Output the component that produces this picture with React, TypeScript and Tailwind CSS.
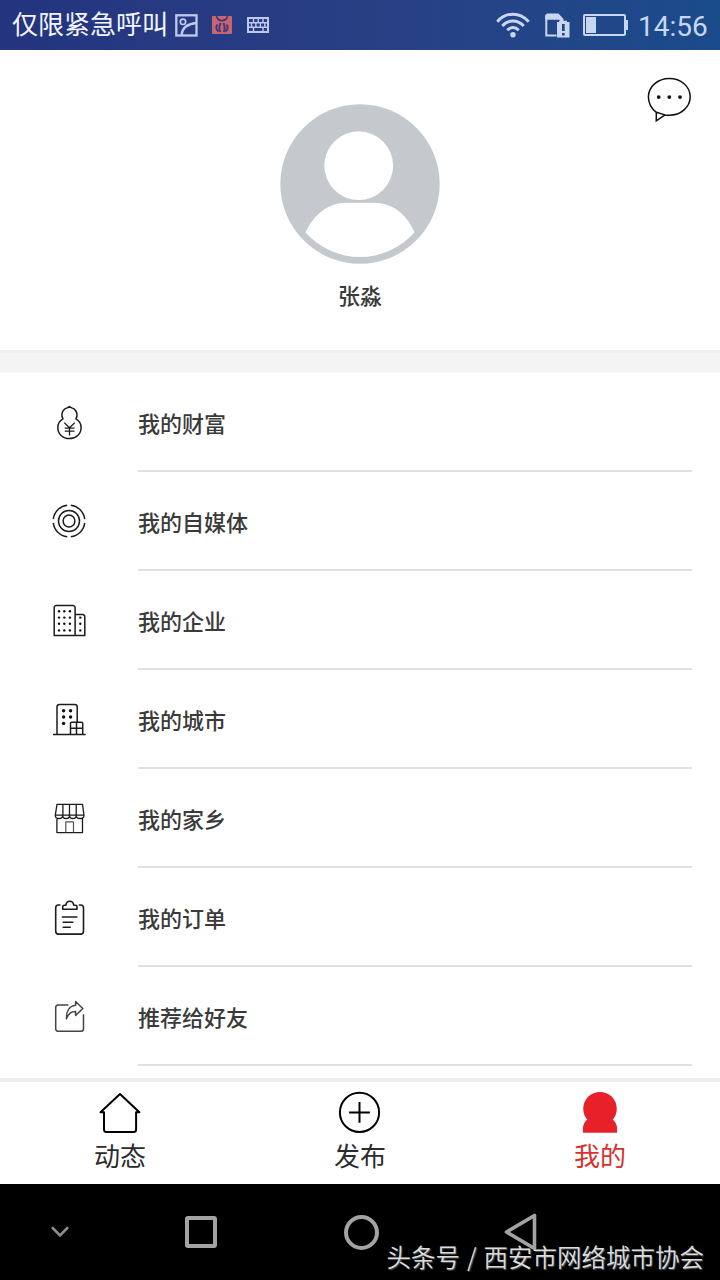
import type { ReactNode } from 'react';

const font = "font-['Roboto','Noto_Sans_CJK_SC',sans-serif]";

const Line = ({ children }: { children: ReactNode }) => (
  <svg
    width="40"
    height="40"
    viewBox="0 0 40 40"
    fill="none"
    stroke="#1c1c1c"
    strokeWidth="1.5"
    strokeLinejoin="round"
  >
    {children}
  </svg>
);

const Dots = ({ points, r }: { points: number[][]; r: number }) => (
  <g fill="#111" stroke="none">
    {points.map(([x, y]) => (
      <circle key={`${x}-${y}`} cx={x} cy={y} r={r} />
    ))}
  </g>
);

const Wealth = () => (
  <Line>
    <path d="M20.4 4.6c-1.2 1.2-3.2 1.3-4.8 2.6-3 2.5-3.5 6.7-1.6 9.6-3 1.7-5.2 4.8-5.2 8.6 0 6.5 5 11.2 11.6 11.2s11.7-4.7 11.7-11.2c0-3.8-2.2-6.9-5.2-8.6 1.9-2.9 1.4-7.1-1.6-9.6-1.6-1.3-3.7-1.4-4.9-2.6z" />
    <path d="M15.2 20.6l5.3 5.2 5.3-5.2M20.5 25.8v7.6M15.7 26.2h9.8M15.7 29.2h9.8" strokeWidth="1.3" />
  </Line>
);

const Media = () => (
  <Line>
    <circle cx="20" cy="20" r="5.9" />
    <circle cx="20" cy="20" r="10.5" />
    <path d="M21.8 4.3A15.8 15.8 0 0 1 35.7 18.2M35.7 21.8A15.8 15.8 0 0 1 21.8 35.7M18.2 35.7A15.8 15.8 0 0 1 4.3 21.8M4.3 18.2A15.8 15.8 0 0 1 18.2 4.3" />
  </Line>
);

const companyDots = [
  ...[11.3, 17.6, 23.7, 30.4].flatMap((y) => [10, 15.3, 20.9].map((x) => [x, y])),
  ...[17.6, 23.7, 30.4].map((y) => [31.3, y]),
];

const Company = () => (
  <Line>
    <path d="M5.2 35.4V7.7a2.3 2.3 0 0 1 2.3-2.3h16.3a2.3 2.3 0 0 1 2.3 2.3v27.7zM26.1 14.5h7.6a2.3 2.3 0 0 1 2.1 2.3v18.6h-9.7" />
    <Dots points={companyDots} r={1.2} />
  </Line>
);

const City = () => (
  <Line>
    <path d="M8 35V8a2.5 2.5 0 0 1 2.5-2.5H25.7a2.5 2.5 0 0 1 2.5 2.5v15" />
    <path d="M21.5 35V24.3a1 1 0 0 1 1-1h10.2a1 1 0 0 1 1 1V35M27.5 23.3V35M21.5 29.3h12.2M4 35.4h32.7" />
    <Dots points={[[14.6, 11.7], [21.6, 11.7], [14.6, 18], [21.6, 18], [14.6, 24.4]]} r={1.7} />
  </Line>
);

const Shop = () => (
  <Line>
    <path
      d="M8 6.4h25.5L35 17.2H6.3zM13.9 6.4v11M20.5 6.4v11M27.2 6.4v11M6.3 17.2c0 4.4 7.4 4.4 7.4 0c0 4.4 6.8 4.4 6.8 0c0 4.4 6.7 4.4 6.7 0c0 4.4 7.8 4.4 7.8 0M7.9 20v14.6h25.6V20"
      strokeWidth="1.3"
    />
    <path d="M16.8 34.5V23.8h7.7v10.7" stroke="#555" strokeWidth="1.2" />
  </Line>
);

const Order = () => (
  <Line>
    <g strokeWidth="1.6">
      <path d="M11.5 8H9.3a2.8 2.8 0 0 0-2.6 2.8v23.5a2.8 2.8 0 0 0 2.8 2.8h22.2a2.8 2.8 0 0 0 2.8-2.8V10.8A2.8 2.8 0 0 0 31.7 8h-1.9" />
      <path d="M13.7 12.2V9.8c0-1 .7-1.6 1.6-1.6h1.6c.3-2.5 1.8-3.9 3.9-3.9s3.6 1.4 3.9 3.9h1.7c.9 0 1.6.6 1.6 1.6v2.4zM12.8 20h15.6M13.6 25.3h10.8M13.6 30.3h8.2" />
    </g>
  </Line>
);

const Share = () => (
  <Line>
    <g stroke="#444">
      <path d="M19.3 9H9a2.5 2.5 0 0 0-2.3 2.5v21.3A2.5 2.5 0 0 0 9 35.3h23a2.5 2.5 0 0 0 2.5-2.5V18.3" />
      <path d="M26.6 5.5l7.2 7-7.2 7v-4c-4.5-.2-7.3 2.3-9.1 7.2-.4-7.3 2.7-12.6 9.1-13.4z" />
    </g>
  </Line>
);

const menus = [
  { title: '我的财富', icon: <Wealth /> },
  { title: '我的自媒体', icon: <Media /> },
  { title: '我的企业', icon: <Company /> },
  { title: '我的城市', icon: <City /> },
  { title: '我的家乡', icon: <Shop /> },
  { title: '我的订单', icon: <Order /> },
  { title: '推荐给好友', icon: <Share /> },
];

const tabs = [
  {
    title: '动态',
    active: false,
    icon: (
      <path
        d="M22 3L2.5 21.3H6v17.2a2.6 2.6 0 0 0 2.6 2.6h26.9a2.6 2.6 0 0 0 2.6-2.6V21.3h3.3z"
        fill="none"
        stroke="#000"
        strokeWidth="2"
        strokeLinejoin="round"
      />
    ),
  },
  {
    title: '发布',
    active: false,
    icon: (
      <g fill="none" stroke="#000" strokeWidth="2">
        <circle cx="21.5" cy="21.4" r="19.6" />
        <path d="M21.5 11v20.8M11.1 21.4h20.8" />
      </g>
    ),
  },
  {
    title: '我的',
    active: true,
    icon: (
      <g fill="#e8202a">
        <circle cx="22" cy="17.7" r="16.8" />
        <path d="M5 41.7V37c0-4 2.1-7 5.400-9.200h23.200C36.900 30 39 33 39 37v4.700z" />
      </g>
    ),
  },
];

const StatusBar = () => (
  <div className="h-[50px] shrink-0 flex items-center pl-3 pr-3 bg-linear-to-r from-[#24347f] via-[#293f84] to-[#194b8b] text-[#c9d6f2]">
    <div className="text-[26px] leading-[50px] text-[#f3f5ff] w-[163px] whitespace-nowrap">仅限紧急呼叫</div>
    <svg width="23" height="23" viewBox="0 0 23 23" fill="none" stroke="#bfcaf0" strokeWidth="2.3">
      <rect x="1.3" y="1.3" width="20.2" height="20.2" />
      <circle cx="8" cy="7.8" r="2.7" strokeWidth="1.7" />
      <path d="M6.5 21c.7-6.5 5.5-11 14.5-12" />
    </svg>
    <svg className="ml-[14px]" width="20" height="18" viewBox="0 0 20 18">
      <rect width="20" height="18" rx="1" fill="#c9656f" />
      <path d="M4.5 0c.8 3.2 3 4.6 5.5 4.6S14.700 3.200 15.500 0" fill="none" stroke="#363a7d" strokeWidth="1.6" />
      <path
        d="M6.5 15.5C4 13.5 3.8 11 5.3 8.5M8.3 16c-1.3-2.5-1.3-5.5.3-9M11.7 16c1.3-2.5 1.3-5.5-.3-9M13.5 15.5c2.5-2 2.7-4.5 1.2-7"
        fill="none"
        stroke="#45397b"
        strokeWidth="2"
      />
    </svg>
    <svg className="ml-[15px]" width="22" height="16" viewBox="0 0 22 16" fill="none" stroke="#bfcaf0" strokeWidth="1.4">
      <rect x="1" y="1" width="20" height="14" strokeWidth="2" />
      <path d="M1 5.7h20M1 10.2h20M6.5 1v4.7M11.2 1v4.7M16 1v4.7M4.5 5.7v4.5M8.9 5.7v4.5M13.4 5.7v4.5M17.8 5.7v4.5M6.5 10.2V15M16 10.2V15" />
    </svg>
    <div className="ml-auto flex items-center">
      <svg width="34" height="26" viewBox="0 0 34 26" fill="none" stroke="currentColor" strokeWidth="3">
        <path d="M1.3 9.7C10-.4 24-.4 32.7 9.7M6.3 14c6-6.7 15.4-6.7 21.4 0M11.3 18.3c3.3-3.6 8.1-3.6 11.4 0" />
        <circle cx="17" cy="22.8" r="2.7" fill="currentColor" stroke="none" />
      </svg>
      <svg className="ml-[15px]" width="25" height="25" viewBox="0 0 25 25">
        <path d="M11.5 22.5H1.3V5.5h12.5L17.5 8" fill="none" stroke="currentColor" strokeWidth="2" />
        <path d="M0 6.5V2.5L2 .5h11.5L18.5 6v3h-3V6.5z" fill="currentColor" />
        <path d="M12 9h2V7.8h8V9h2.5v15.5H12z" fill="currentColor" />
        <path d="M17 11h2.7v7H17zM17 20h2.7v2.5H17z" fill="#234583" />
      </svg>
      <svg className="ml-[13px]" width="45" height="22" viewBox="0 0 45 22">
        <rect x="1" y="1" width="41" height="20" rx="1" fill="none" stroke="currentColor" strokeWidth="2" />
        <path d="M3 3h10v16H3zM42 6h3v10h-3z" fill="currentColor" />
      </svg>
      <div className="ml-[10px] w-[70px] text-[28px] leading-[50px] whitespace-nowrap pt-[3px]">14:56</div>
    </div>
  </div>
);

const Profile = () => (
  <div className="relative h-[300px] shrink-0 pt-[54px] flex flex-col items-center">
    <svg width="160" height="160" viewBox="0 0 160 160">
      <circle cx="80" cy="80" r="79.7" fill="#c5c8cd" />
      <circle cx="78.7" cy="61.7" r="34.4" fill="#fff" />
      <path d="M25.6 128.5C34 110 49 98.8 66 98.8h28c18 0 33 11.2 40.4 29.7a72.6 72.6 0 0 1-108.8 0z" fill="#fff" />
    </svg>
    <div className="mt-[17px] text-[22px] leading-8 font-medium text-[#3a3a3a]">张淼</div>
    <button className="absolute right-[28px] top-[27px]">
      <svg width="45" height="46" viewBox="0 0 45 46" fill="none" stroke="#111" strokeWidth="1.5">
        <path d="M9.3 35.3v8.6l8.7-6c1.4.3 2.9.4 4.3.4 11.6 0 20.9-8.2 20.9-18.5S33.9 1.5 22.3 1.5 1.4 9.7 1.4 19.8c0 6.5 3.3 12 7.9 15.5zl8.7 2.6" />
        <Dots points={[[11.7, 20.1], [22.3, 20.1], [33, 20.1]]} r={1.9} />
      </svg>
    </button>
  </div>
);

export default function App() {
  return (
    <div className={`w-[720px] h-[1280px] overflow-hidden flex flex-col bg-white ${font}`} lang="zh-CN">
      <StatusBar />
      <Profile />
      <div className="h-[23px] shrink-0 bg-[#f4f4f4] border-t-3 border-[#efefef]" />

      <div className="h-[705px] shrink-0">
        {menus.map((item) => (
          <div key={item.title} className="h-[99px] flex pl-[49px] pr-7">
            <div className="w-[89px] pt-[29px]">{item.icon}</div>
            <div className="flex-1 border-b-2 border-[#e0e0e0] text-[22px] leading-[103px] font-medium text-[#3a3a3a]">
              {item.title}
            </div>
          </div>
        ))}
      </div>

      <div className="h-[106px] shrink-0 grid grid-cols-3 border-t-4 border-[#eeeeee]">
        {tabs.map((tab) => (
          <button key={tab.title} className="flex flex-col items-center pt-[9px]">
            <svg width="44" height="44" viewBox="0 0 44 44">
              {tab.icon}
            </svg>
            <span className={`text-[26px] leading-[44px] ${tab.active ? 'text-[#d9302f]' : 'text-[#2c2c2c]'}`}>
              {tab.title}
            </span>
          </button>
        ))}
      </div>

      <div className="relative h-24 shrink-0 bg-black">
        <div className="h-full grid grid-cols-[121px_160px_160px_160px] items-center justify-items-center text-[#a3a3a3]">
          <svg width="19" height="12" viewBox="0 0 19 12" fill="none" stroke="#8b8b8b" strokeWidth="2.6" strokeLinecap="round">
            <path d="M1.7 2l7.3 7.5L16.300 2" />
          </svg>
          <div className="size-8 border-4 border-current rounded-[3px]" />
          <div className="size-[35px] border-4 border-current rounded-full" />
          <svg width="34" height="38" viewBox="0 0 34 38" fill="none" stroke="currentColor" strokeWidth="3.6" strokeLinejoin="round">
            <path d="M30.5 2.5v33L2.500 19z" />
          </svg>
        </div>
        <div className="absolute right-[16px] bottom-[5px] text-[24.5px] leading-9 font-['Noto_Sans_CJK_SC',sans-serif] font-[350] [word-spacing:1.5px] whitespace-nowrap text-[#dcdcdc] [text-shadow:1px_1px_1px_#555]">
          头条号 / 西安市网络城市协会
        </div>
      </div>
    </div>
  );
}
